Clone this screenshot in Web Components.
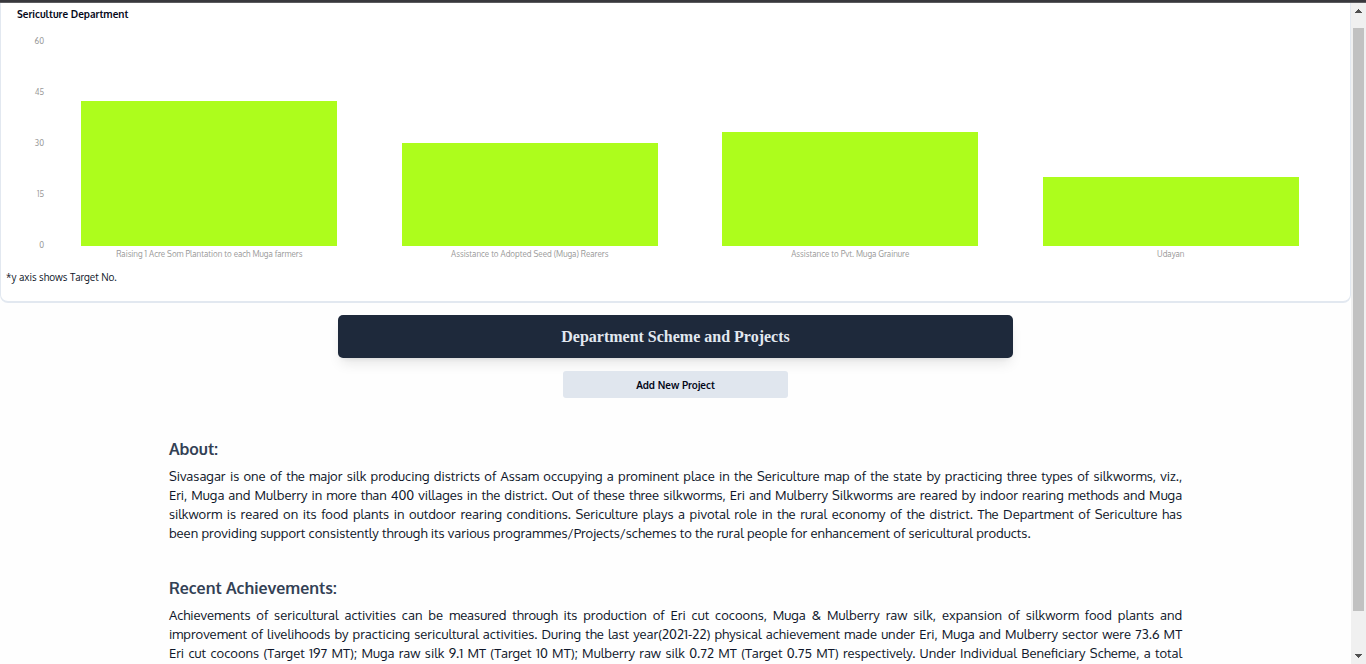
<!DOCTYPE html>
<html lang="en">
<head>
<meta charset="utf-8">
<meta name="viewport" content="width=device-width, initial-scale=1">
<title>Sericulture Department</title>
<style>
  html, body { margin: 0; height: 100%; }
  body { font: 13px/19px Oxygen, "Noto Sans", sans-serif; color: #0f172a; background: #fefefe; overflow: hidden; }
</style>
</head>
<body>
<department-page>
  <chart-card heading="Sericulture Department" note="*y axis shows Target No.">
    <bar-chart max="60" step="15">
      <chart-bar value="42">Raising 1 Acre Som Plantation to each Muga farmers</chart-bar>
      <chart-bar value="30">Assistance to Adopted Seed (Muga) Rearers</chart-bar>
      <chart-bar value="33">Assistance to Pvt. Muga Grainure</chart-bar>
      <chart-bar value="20">Udayan</chart-bar>
    </bar-chart>
  </chart-card>
  <page-banner>Department Scheme and Projects</page-banner>
  <action-button>Add New Project</action-button>
  <text-section heading="About:">Sivasagar is one of the major silk producing districts of Assam occupying a prominent place in the Sericulture map of the state by practicing three types of silkworms, viz., Eri,&nbsp;Muga and Mulberry in more than 400 villages in the district. Out of these three silkworms, Eri and Mulberry Silkworms are reared by indoor rearing methods and Muga silkworm is reared on its food plants in outdoor rearing conditions. Sericulture plays a pivotal role in the rural economy of the district. The Department of Sericulture has been&nbsp;providing support consistently through its various programmes/Projects/schemes to the rural people for enhancement of sericultural products.</text-section>
  <text-section heading="Recent Achievements:" open-ended>Achievements of sericultural activities can be measured through its production of Eri cut cocoons, Muga &amp; Mulberry raw silk, expansion of silkworm food plants and improvement of livelihoods by practicing sericultural activities. During the last year(2021-22) physical achievement made under Eri, Muga and Mulberry sector were 73.6 MT Eri&nbsp;cut cocoons (Target 197 MT); Muga raw silk 9.1 MT (Target 10 MT); Mulberry raw silk 0.72 MT (Target 0.75 MT) respectively. Under Individual Beneficiary Scheme, a total</text-section>
</department-page>
<script>
class BaseElement extends HTMLElement {
  render(html) { this.attachShadow({ mode: 'open' }).innerHTML = html; }
}

customElements.define('scroll-track', class extends BaseElement {
  connectedCallback() {
    this.render(`<style>
      :host { display: flex; flex-direction: column; align-items: center; background: #f0f0f0; }
      svg { display: block; width: 15px; height: 17px; flex: none; }
      .rail { flex: 1; width: 11px; display: flex; flex-direction: column; padding: 8px 0 36px; }
      .thumb { flex: 1; background: #c1c1c1; }
    </style>
    <svg viewBox="0 0 15 17" shape-rendering="crispEdges"><path d="M4 10h7v-1h-1v-1h-1v-1h-1v-1h-1v1h-1v1h-1v1h-1z" fill="#505050"/></svg>
    <div class="rail"><div class="thumb"></div></div>
    <svg viewBox="0 0 15 17" shape-rendering="crispEdges"><path d="M4 7h7v1h-1v1h-1v1h-1v1h-1v-1h-1v-1h-1v-1h-1z" fill="#505050"/></svg>`);
  }
});

customElements.define('department-page', class extends BaseElement {
  connectedCallback() {
    this.render(`<style>
      :host { display: flex; flex-direction: column; height: 100vh; }
      .edge { flex: none; height: 3px; box-sizing: border-box; background: #38383d; border-bottom: 1px solid #5b5b5f; }
      .body { flex: 1; min-height: 0; display: grid; grid-template-columns: minmax(0, 1fr) 15px; }
      main { overflow: hidden; display: flex; flex-direction: column; min-height: 0; }
      ::slotted(*) { flex: none; }
    </style>
    <div class="edge"></div>
    <div class="body"><main><slot></slot></main><scroll-track aria-hidden="true"></scroll-track></div>`);
  }
});

customElements.define('chart-card', class extends BaseElement {
  connectedCallback() {
    this.render(`<style>
      :host { display: block; box-sizing: border-box; border: 1px solid #e2e8f0; border-top: 0; border-bottom-width: 2px;
        border-radius: 0 0 8px 8px; background: #fff; padding: 3px 5px 15px; }
      h1 { margin: 0 11px 14px; font-size: 10px; line-height: 16px; font-weight: 600; color: #020617; }
      p { margin: 8px 0 0; font-size: 10px; line-height: 18px; }
    </style>
    <h1>${this.getAttribute('heading')}</h1><slot></slot><p>${this.getAttribute('note')}</p>`);
  }
});

customElements.define('bar-chart', class extends BaseElement {
  connectedCallback() {
    const max = +this.getAttribute('max'), step = +this.getAttribute('step');
    let ticks = '';
    for (let v = max; v >= 0; v -= step) ticks += `<span>${v}</span>`;
    this.render(`<style>
      :host { display: grid; grid-template-columns: 38px minmax(0, 1fr); column-gap: 5px; padding-right: 14px; }
      .axis { display: flex; flex-direction: column; justify-content: space-between; text-align: right;
        height: 214px; font-size: 8px; line-height: 10px; color: #999; }
      .plot { display: grid; grid-auto-flow: column; grid-auto-columns: minmax(0, 1fr); padding-top: 3px; }
    </style>
    <div class="axis">${ticks}</div><div class="plot"><slot></slot></div>`);
  }
});

customElements.define('chart-bar', class extends BaseElement {
  connectedCallback() {
    const share = this.getAttribute('value') / this.parentElement.getAttribute('max') * 100;
    this.render(`<style>
      :host { display: block; color: #999; font-size: 8px; line-height: 12px; text-align: center; }
      .area { height: 207px; display: flex; align-items: flex-end; justify-content: center; margin-bottom: 2px; }
      .bar { width: 80%; background: #adfd1c; }
    </style>
    <div class="area"><div class="bar" style="height:${share}%"></div></div><slot></slot>`);
  }
});

customElements.define('page-banner', class extends BaseElement {
  connectedCallback() {
    this.render(`<style>
      :host { display: block; width: 50%; margin: 12px auto 0; }
      h2 { margin: 0; padding: 10px; border-radius: 5px; background: #1e293b; color: #e2e8f0; text-align: center;
        font: bold 16px/23px "Liberation Serif", serif;
        box-shadow: 0 8px 13px -3px rgba(0,0,0,.1), 0 3px 5px -3px rgba(0,0,0,.1); }
    </style><h2><slot></slot></h2>`);
  }
});

customElements.define('action-button', class extends BaseElement {
  connectedCallback() {
    this.render(`<style>
      :host { display: flex; justify-content: center; margin: 13px 0 19px; }
      button { width: calc(100% / 6); border: 0; border-radius: 3px; padding: 6px 5px 4px; background: #e0e6ee;
        color: #020617; font: 600 10px/17px Oxygen, "Noto Sans", sans-serif; }
    </style><button type="button"><slot></slot></button>`);
  }
});

customElements.define('text-section', class extends BaseElement {
  connectedCallback() {
    this.render(`<style>
      :host { display: block; width: 75%; margin: 20px auto 13px; }
      h3 { margin: 0; font-size: 16px; line-height: 24px; font-weight: 600; color: #334155; }
      p { margin: 6px 0 0; text-align: justify; }
      :host([open-ended]) p { text-align-last: justify; }
    </style><h3>${this.getAttribute('heading')}</h3><p><slot></slot></p>`);
  }
});
</script>
</body>
</html>
